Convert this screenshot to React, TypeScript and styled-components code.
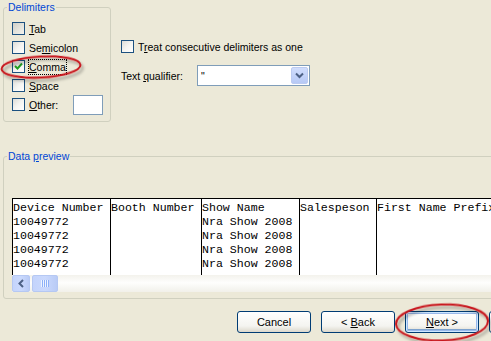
import styled, { createGlobalStyle } from "styled-components";

const Global = createGlobalStyle`
  body {
    margin: 0;
    background: #ece9d8;
  }
`;

const Root = styled.div`
  position: relative;
  width: 491px;
  height: 341px;
  overflow: hidden;
  background: #ece9d8;
  font-family: Tahoma, "Liberation Sans", Arial, sans-serif;
  font-size: 10.5px;
  color: #000;
`;

const TopRow = styled.div`
  display: flex;
  align-items: flex-start;
  padding: 1px 0 0 3px;
`;

interface GroupProps {
  $w: number;
  $h: number;
  $pt: number;
}

const Group = styled.fieldset<GroupProps>`
  box-sizing: border-box;
  flex-shrink: 0;
  width: ${(p) => p.$w}px;
  height: ${(p) => p.$h}px;
  margin: 0;
  padding: ${(p) => p.$pt}px 7px 0 8px;
  border: 1px solid #d0d0bf;
  border-radius: 3px;
  min-inline-size: 0;
`;

const Legend = styled.legend`
  margin-left: -5px;
  padding: 0 1px;
  line-height: 12px;
  color: #0046d5;
`;

const CheckRow = styled.div`
  display: flex;
  align-items: center;
  gap: 4px;
  height: 19px;
  white-space: nowrap;
`;

const Box = styled.span<{ $grey?: boolean }>`
  box-sizing: border-box;
  flex-shrink: 0;
  width: 13px;
  height: 13px;
  border: 1px solid #1c5180;
  background: ${(p) =>
    p.$grey
      ? "linear-gradient(135deg, #cfcfc8, #e6e6df 60%, #f2f2ee)"
      : "linear-gradient(135deg, #dcdcd7, #f4f4f1 50%, #ffffff)"};
  display: flex;
  align-items: center;
  justify-content: center;
`;

const Label = styled.span<{ $focus?: boolean }>`
  line-height: 14px;
  ${(p) =>
    p.$focus &&
    `
    border: 1px dotted #000;
    margin-left: -1px;
  `}
`;

const U = styled.span`
  text-decoration: underline;
`;

const SmallInput = styled.div`
  box-sizing: border-box;
  width: 30px;
  height: 20px;
  margin-left: auto;
  border: 1px solid #7f9db9;
  background: #fff;
`;

const Options = styled.div`
  display: flex;
  flex-direction: column;
  margin-left: 10px;
  padding-top: 36px;
`;

const QualifierRow = styled.div`
  display: flex;
  align-items: center;
  margin-top: 9px;
`;

const QualifierLabel = styled.span`
  width: 76px;
`;

const Combo = styled.div`
  box-sizing: border-box;
  display: flex;
  align-items: center;
  justify-content: space-between;
  width: 113px;
  height: 21px;
  padding: 1px 1px 1px 3px;
  border: 1px solid #7f9db9;
  background: #fff;
`;

const DropButton = styled.span`
  box-sizing: border-box;
  width: 17px;
  height: 17px;
  border: 1px solid #bccbf1;
  border-radius: 2px;
  background: linear-gradient(#d0ddfd, #b7c9f5);
  display: flex;
  align-items: center;
  justify-content: center;
`;

const DataGroup = styled(Group)`
  margin: 28px 0 0 3px;
`;

const Table = styled.div`
  display: flex;
  height: 76px;
  overflow: hidden;
  border-top: 1px solid #000;
  border-left: 1px solid #000;
  background: #fff;
  font-family: "Courier New", "Liberation Mono", monospace;
  font-size: 11.6px;
`;

const Column = styled.div<{ $w: number }>`
  box-sizing: border-box;
  flex-shrink: 0;
  width: ${(p) => p.$w}px;
  padding-top: 2px;
  border-right: 1px solid #000;
  white-space: nowrap;
  overflow: hidden;
`;

const Cell = styled.div`
  height: 14px;
  line-height: 14px;
`;

const ScrollBar = styled.div`
  display: flex;
  align-items: center;
  gap: 2px;
  height: 17px;
  background: linear-gradient(#f3f2ec, #fefefd 45%, #f1f0ea);
`;

const ScrollPart = styled.span<{ $w: number }>`
  box-sizing: border-box;
  width: ${(p) => p.$w}px;
  height: 17px;
  border: 1px solid #b5c8f3;
  border-radius: 2px;
  background: linear-gradient(90deg, #c4d4fc, #cad9fd 50%, #b9cbf6);
  display: flex;
  align-items: center;
  justify-content: center;
`;

const ButtonRow = styled.div`
  display: flex;
  gap: 10px;
  margin-top: 12px;
  padding-left: 237px;
`;

const XPButton = styled.div<{ $default?: boolean }>`
  box-sizing: border-box;
  flex-shrink: 0;
  width: 74px;
  height: 22px;
  border: 1px solid #003c74;
  border-radius: 3px;
  background: linear-gradient(#ffffff, #f4f4f0 70%, #dcd8cc);
  display: flex;
  align-items: center;
  justify-content: center;
  font-size: 11px;
  white-space: pre;
  ${(p) =>
    p.$default &&
    `
    box-shadow: inset 0 0 0 1px #cee7ff, inset 0 0 0 2px #98b8ea, inset 0 -1px 0 2px #7da2ce;
  `}
`;

const Overlay = styled.svg`
  position: absolute;
  left: 0;
  top: 0;
  pointer-events: none;
`;

const columns: { w: number; cells: string[] }[] = [
  { w: 98, cells: ["Device Number", "10049772", "10049772", "10049772", "10049772"] },
  { w: 91, cells: ["Booth Number", "", "", "", ""] },
  { w: 98, cells: ["Show Name", "Nra Show 2008", "Nra Show 2008", "Nra Show 2008", "Nra Show 2008"] },
  { w: 77, cells: ["Salespeson", "", "", "", ""] },
  { w: 200, cells: ["First Name Prefix", "", "", "", ""] },
];

const Check = () => (
  <svg width="9" height="9" viewBox="0 0 9 9">
    <path d="M1 4 L3.5 6.5 L8 1.5" fill="none" stroke="#21a121" strokeWidth="2" />
  </svg>
);

const Chevron = ({ dir }: { dir: "down" | "left" }) => (
  <svg width="9" height="9" viewBox="0 0 9 9">
    <path
      d={dir === "down" ? "M1 2.5 L4.5 6 L8 2.5" : "M6 1 L2.5 4.5 L6 8"}
      fill="none"
      stroke="#4d6185"
      strokeWidth="2"
    />
  </svg>
);

const Grip = () => (
  <svg width="8" height="7" viewBox="0 0 8 7">
    {[0, 2, 4, 6].map((x) => (
      <rect key={x} x={x} y="0" width="1" height="7" fill="#eef4fe" />
    ))}
    {[1, 3, 5, 7].map((x) => (
      <rect key={x} x={x} y="0" width="1" height="7" fill="#8cb0f8" />
    ))}
  </svg>
);

function App() {
  return (
    <Root>
      <Global />
      <TopRow>
        <Group $w={108} $h={121} $pt={6}>
          <Legend>Delimiters</Legend>
          <CheckRow>
            <Box $grey />
            <Label>
              <U>T</U>ab
            </Label>
          </CheckRow>
          <CheckRow>
            <Box />
            <Label>Se<U>m</U>icolon</Label>
          </CheckRow>
          <CheckRow>
            <Box>
              <Check />
            </Box>
            <Label $focus>
              <U>C</U>omma
            </Label>
          </CheckRow>
          <CheckRow>
            <Box />
            <Label>
              <U>S</U>pace
            </Label>
          </CheckRow>
          <CheckRow>
            <Box />
            <Label>
              <U>O</U>ther:
            </Label>
            <SmallInput />
          </CheckRow>
        </Group>
        <Options>
          <CheckRow>
            <Box />
            <Label>
              T<U>r</U>eat consecutive delimiters as one
            </Label>
          </CheckRow>
          <QualifierRow>
            <QualifierLabel>
              Text <U>q</U>ualifier:
            </QualifierLabel>
            <Combo>
              <span>"</span>
              <DropButton>
                <Chevron dir="down" />
              </DropButton>
            </Combo>
          </QualifierRow>
        </Options>
      </TopRow>

      <DataGroup $w={540} $h={149} $pt={36}>
        <Legend>
          Data <U>p</U>review
        </Legend>
        <Table>
          {columns.map((c, i) => (
            <Column key={i} $w={c.w}>
              {c.cells.map((t, j) => (
                <Cell key={j}>{t}</Cell>
              ))}
            </Column>
          ))}
        </Table>
        <ScrollBar>
          <ScrollPart $w={18}>
            <Chevron dir="left" />
          </ScrollPart>
          <ScrollPart $w={26}>
            <Grip />
          </ScrollPart>
        </ScrollBar>
      </DataGroup>

      <ButtonRow>
        <XPButton>Cancel</XPButton>
        <XPButton>
          {"< "}
          <U>B</U>ack
        </XPButton>
        <XPButton $default>
          <U>N</U>
          {"ext >"}
        </XPButton>
        <XPButton />
      </ButtonRow>

      <Overlay width="491" height="341">
        <defs>
          <filter id="shade" x="-20%" y="-50%" width="140%" height="200%">
            <feDropShadow dx="2" dy="3" stdDeviation="1.5" floodColor="#000" floodOpacity="0.35" />
          </filter>
        </defs>
        <ellipse
          cx="41"
          cy="67"
          rx="39.5"
          ry="10.5"
          transform="rotate(-3 41 67)"
          fill="none"
          stroke="#c8141c"
          strokeWidth="2"
          filter="url(#shade)"
        />
        <ellipse
          cx="442"
          cy="322.5"
          rx="46"
          ry="18"
          transform="rotate(-2 442 322.5)"
          fill="none"
          stroke="#c8141c"
          strokeWidth="2"
          filter="url(#shade)"
        />
      </Overlay>
    </Root>
  );
}

export default App;
